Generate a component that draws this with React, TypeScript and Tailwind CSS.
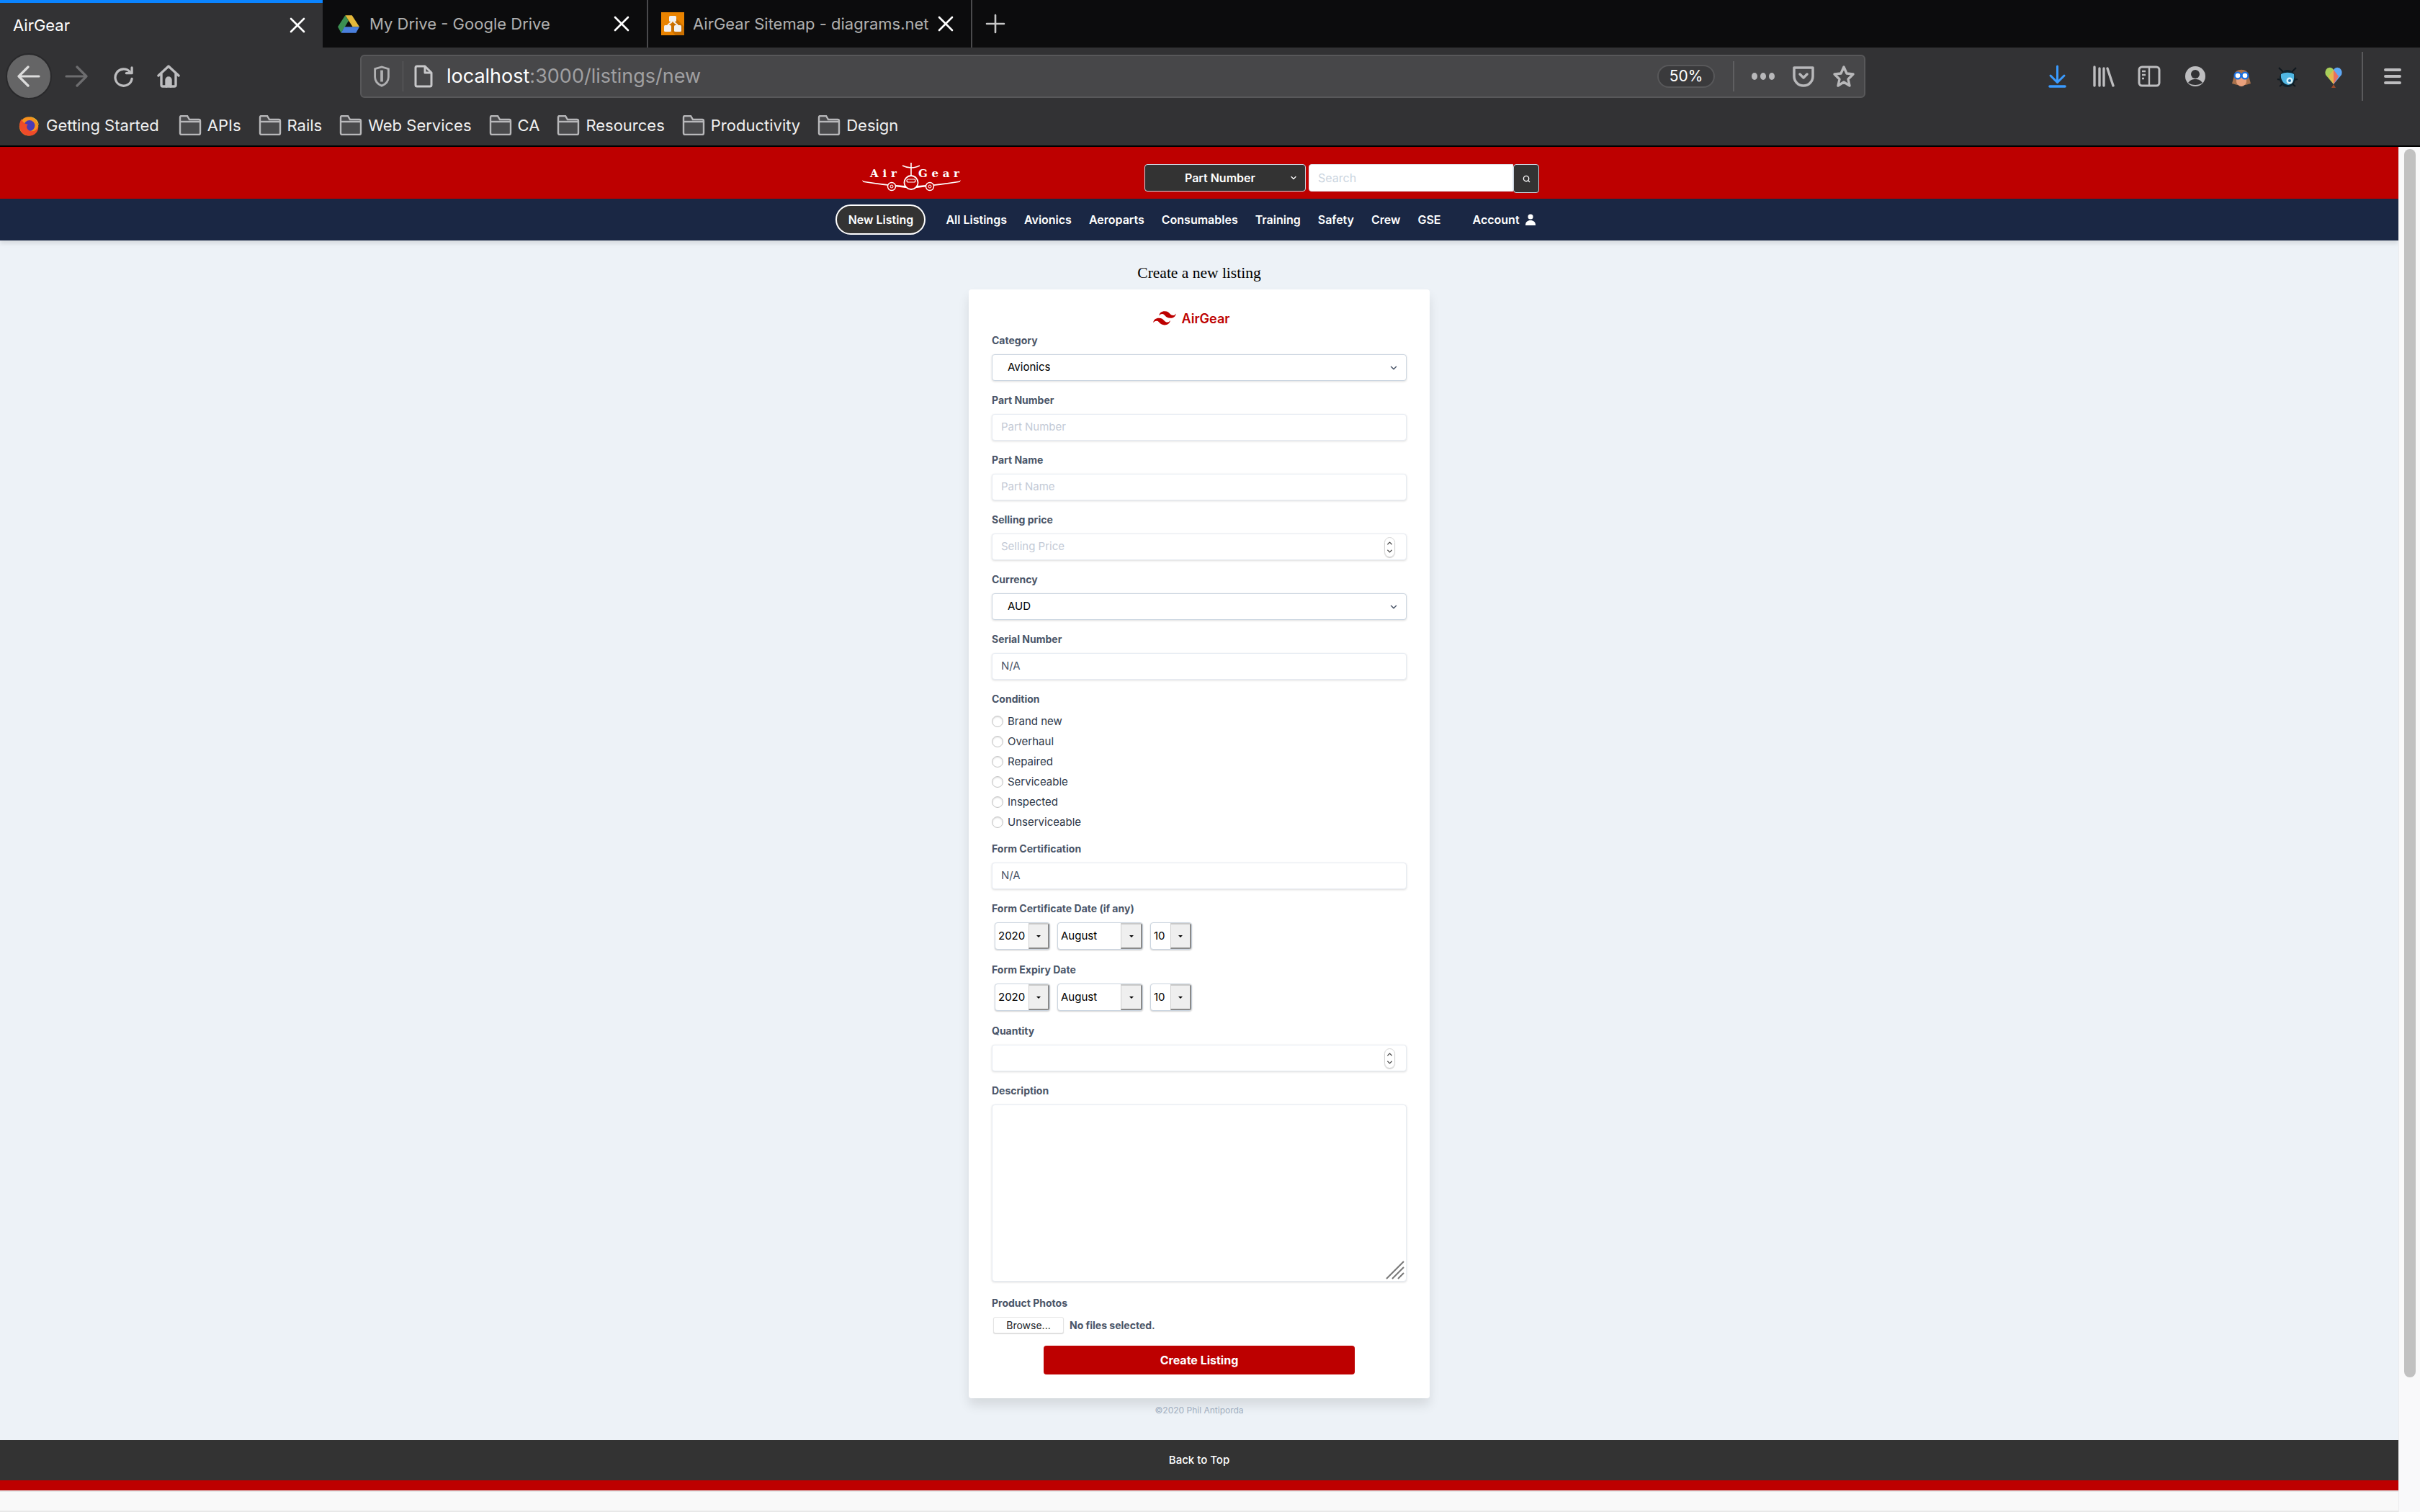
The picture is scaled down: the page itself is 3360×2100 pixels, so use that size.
import { ChevronDown, ChevronUp, Search } from 'lucide-react';

const sans = "font-['Inter','Noto_Sans',sans-serif]";
const bookmarks = ['APIs', 'Rails', 'Web Services', 'CA', 'Resources', 'Productivity', 'Design'];
const navLinks = ['All Listings', 'Avionics', 'Aeroparts', 'Consumables', 'Training', 'Safety', 'Crew', 'GSE'];
const conditions = ['Brand new', 'Overhaul', 'Repaired', 'Serviceable', 'Inspected', 'Unserviceable'];

function Tab({ title, width, active, icon }: { title: string; width: string; active?: boolean; icon?: React.ReactNode }) {
  return (
    <div className={`${width} h-full flex items-center pr-[16px] ${active ? 'bg-[#323234] border-t-4 border-[#0a84ff] pl-[18px] text-white' : 'border-r-2 border-[#4a4a4c] text-[#b0b0b0]'}`}>
      {icon}
      <span className="flex-1 text-[22px] whitespace-nowrap overflow-hidden">{title}</span>
      <svg viewBox="0 0 22 22" className="w-[22px] h-[22px] mr-[8px] text-white" fill="none" stroke="currentColor" strokeWidth="2.6" strokeLinecap="round">
        <path d="M2 2l18 18M20 2 2 20" />
      </svg>
    </div>
  );
}

function Label({ children }: { children: React.ReactNode }) {
  return <div className="h-[19px] mb-[10px] text-[14px] leading-[19px] font-bold text-[#4a5568]">{children}</div>;
}

function Spinner() {
  return (
    <span className="w-[15px] h-[28px] mr-[3px] rounded-full border border-[#d5d5d5] flex flex-col items-center justify-center shadow-[0_1px_1px_rgba(0,0,0,0.2)]">
      <ChevronUp className="w-[11px] h-[11px] text-[#444]" strokeWidth={3} />
      <ChevronDown className="w-[11px] h-[11px] text-[#444]" strokeWidth={3} />
    </span>
  );
}

function TextField({ label, placeholder, value, spinner }: { label: string; placeholder?: string; value?: string; spinner?: boolean }) {
  return (
    <div className="mb-[17px]">
      <Label>{label}</Label>
      <div className="h-[37px] border border-[#e6ebf2] rounded-[4px] shadow-[0_1px_3px_rgba(0,0,0,0.14)] bg-white pl-[12px] pr-[12px] flex items-center justify-between text-[15px]">
        <span className={value ? 'text-[#4a5568]' : 'text-[#c3cad6]'}>{value || placeholder}</span>
        {spinner && <Spinner />}
      </div>
    </div>
  );
}

function SelectField({ label, value }: { label: string; value: string }) {
  return (
    <div className="mb-[17px]">
      <Label>{label}</Label>
      <div className="h-[37px] border border-[#cbd5e0] rounded-[4px] shadow-[0_1px_3px_rgba(0,0,0,0.14)] bg-white pl-[21px] pr-[10px] flex items-center justify-between text-[15px] text-black">
        <span>{value}</span>
        <ChevronDown className="w-[14px] h-[14px] text-[#4a5568]" strokeWidth={2.5} />
      </div>
    </div>
  );
}

function DatePart({ value, width, arrow }: { value: string; width: string; arrow: string }) {
  return (
    <div className={`${width} h-[38px] flex border border-[#cbd5e0] rounded-[4px] shadow-[0_1px_2px_rgba(0,0,0,0.2)] bg-white overflow-hidden`}>
      <span className="flex-1 pl-[4px] text-[15px] leading-[36px] text-black">{value}</span>
      <span className={`${arrow} bg-[#efefef] border-r-2 border-b-2 border-t-2 border-t-[#c8c8c8] border-r-[#8a8a8a] border-b-[#8a8a8a] border-l border-l-[#d0d0d0] flex items-center justify-center`}>
        <span className="w-0 h-0 border-l-[3px] border-r-[3px] border-t-[3px] border-l-transparent border-r-transparent border-t-black" />
      </span>
    </div>
  );
}

function DateRow({ label }: { label: string }) {
  return (
    <div className="mb-[18px]">
      <Label>{label}</Label>
      <div className="flex gap-[10px] pl-[4px]">
        <DatePart value="2020" width="w-[77px]" arrow="w-[29px]" />
        <DatePart value="August" width="w-[119px]" arrow="w-[30px]" />
        <DatePart value="10" width="w-[58px]" arrow="w-[29px]" />
      </div>
    </div>
  );
}

function PlaneLogo() {
  return (
    <svg viewBox="0 0 137 40" className="-mt-[2px] w-[137px] h-[40px] text-white">
      <path d="M0 24 L1.5 27 C20 30 45 33 60 35 L76 35 C92 33 117 30 135.5 27 L137 24 L135 25.5 C115 29 92 31 76 32 L60 32 C45 31 22 29 2 25.5 Z" fill="currentColor" />
      <circle cx="68" cy="27.5" r="9.5" fill="#bd0000" stroke="currentColor" strokeWidth="1.8" />
      <rect x="62" y="23" width="12" height="4" rx="2" fill="none" stroke="currentColor" strokeWidth="1.2" />
      <path d="M68 0 V18 M56 4 C60 6 64 7 68 7 C72 7 76 6 80 4" fill="none" stroke="currentColor" strokeWidth="1.6" />
      <circle cx="41" cy="33" r="5.5" fill="#bd0000" stroke="currentColor" strokeWidth="1.4" />
      <circle cx="41" cy="33" r="2" fill="none" stroke="currentColor" strokeWidth="1" />
      <circle cx="94" cy="33" r="5.5" fill="#bd0000" stroke="currentColor" strokeWidth="1.4" />
      <circle cx="94" cy="33" r="2" fill="none" stroke="currentColor" strokeWidth="1" />
      <text x="11" y="20" fontSize="15" fontWeight="700" textLength="37" lengthAdjust="spacing" fontFamily="DejaVu Serif, serif" fill="currentColor">Air</text>
      <text x="78" y="20" fontSize="15" fontWeight="700" textLength="57" lengthAdjust="spacing" fontFamily="DejaVu Serif, serif" fill="currentColor">Gear</text>
    </svg>
  );
}

function FolderIcon() {
  return (
    <svg viewBox="0 0 32 28" className="w-[32px] h-[28px] mr-[8px] text-[#b8b8ba]" stroke="currentColor" strokeWidth="2.4">
      <path d="M2 3a2 2 0 0 1 2-2h8l3 5h13a2 2 0 0 1 2 2v17a2 2 0 0 1-2 2H4a2 2 0 0 1-2-2z" fill="#4a4a4c" />
      <path d="M2 9h28" fill="none" />
    </svg>
  );
}

function Toolbar() {
  return (
    <div className="h-[80px] bg-[#323234] flex items-center pl-[8px]">
      <div className="w-[64px] h-[64px] rounded-full bg-[#656566] border-2 border-[#29292b] flex items-center justify-center">
        <svg viewBox="0 0 32 32" className="w-[32px] h-[32px] text-[#dcdcdc]" fill="none" stroke="currentColor" strokeWidth="3.2" strokeLinecap="round" strokeLinejoin="round">
          <path d="M30 16H3M15 3 2 16l13 13" />
        </svg>
      </div>
      <svg viewBox="0 0 32 32" className="ml-[18px] w-[32px] h-[32px] text-[#6d6d6f]" fill="none" stroke="currentColor" strokeWidth="3.2" strokeLinecap="round" strokeLinejoin="round">
        <path d="M2 16h27M17 3l13 13-13 13" />
      </svg>
      <svg viewBox="0 0 30 30" className="ml-[35px] w-[29px] h-[29px] text-[#bdbdbf]" fill="none" stroke="currentColor" strokeWidth="3.4" strokeLinecap="round" strokeLinejoin="round">
        <path d="M24 8a12 12 0 1 0 3 10" />
        <path d="M27 2v8h-8" />
      </svg>
      <svg viewBox="0 0 32 32" className="ml-[32px] w-[32px] h-[32px] text-[#bdbdbf]" fill="none" stroke="currentColor" strokeWidth="3.4" strokeLinecap="round" strokeLinejoin="round">
        <path d="M2 15 16 2l14 13" />
        <path d="M6 13v15a2 2 0 0 0 2 2h16a2 2 0 0 0 2-2V13" />
        <path d="M13 30v-9a3 3 0 0 1 6 0v9" fill="currentColor" />
      </svg>
      <div className="ml-[250px] w-[2090px] h-[60px] rounded-[6px] bg-[#474749] border-2 border-[#58585a] flex items-center pl-[16px] pr-[12px]">
        <svg viewBox="0 0 24 32" className="w-[24px] h-[30px] text-[#b0b0b2]" fill="none" stroke="currentColor" strokeWidth="3">
          <path d="M2 5 12 2l10 3v12c0 7-5 11-10 13C7 28 2 24 2 17z" />
          <path d="M12 7v17" strokeWidth="4" />
        </svg>
        <div className="w-[1px] h-[42px] bg-[#5f5f61] ml-[17px] mr-[14px]" />
        <svg viewBox="0 0 28 32" className="w-[28px] h-[32px] text-[#c8c8ca]" fill="none" stroke="currentColor" strokeWidth="3" strokeLinejoin="round">
          <path d="M3 4a2 2 0 0 1 2-2h11l9 9v17a2 2 0 0 1-2 2H5a2 2 0 0 1-2-2z" />
          <path d="M16 2v9h9" />
        </svg>
        <div className="ml-[18px] text-[27px] flex-1 whitespace-nowrap">
          <span className="text-white">localhost</span>
          <span className="text-[#a0a0a2]">:3000/listings/new</span>
        </div>
        <div className="w-[80px] h-[32px] rounded-full bg-[#3a3a3c] border-2 border-[#58585a] flex items-center justify-center text-[21px] text-white">50%</div>
        <div className="w-[2px] h-[42px] bg-[#5f5f61] ml-[25px] mr-[24px]" />
        <svg viewBox="0 0 32 12" className="w-[32px] h-[12px] text-[#b8b8ba]" fill="currentColor">
          <ellipse cx="4" cy="6" rx="4" ry="5" />
          <ellipse cx="16" cy="6" rx="4" ry="5" />
          <ellipse cx="28" cy="6" rx="4" ry="5" />
        </svg>
        <svg viewBox="0 0 32 32" className="ml-[24px] w-[32px] h-[32px] text-[#b8b8ba]" fill="none" stroke="currentColor" strokeWidth="3.5" strokeLinecap="round" strokeLinejoin="round">
          <path d="M3 4h26v12a13 13 0 0 1-26 0z" />
          <path d="m11 13 5 5 5-5" />
        </svg>
        <svg viewBox="0 0 32 32" className="ml-[24px] w-[32px] h-[32px] text-[#b8b8ba]" fill="none" stroke="currentColor" strokeWidth="3.4" strokeLinejoin="round">
          <path d="m16 3 4 9 9 1-7 7 2 9-8-5-8 5 2-9-7-7 9-1z" />
        </svg>
      </div>
      <svg viewBox="0 0 25 32" className="ml-[254px] w-[25px] h-[32px] text-[#3a9bff]" fill="none" stroke="currentColor" strokeWidth="3" strokeLinecap="round" strokeLinejoin="round">
        <path d="M12.5 2v22M3 15l9.5 9.5L22 15" />
        <path d="M2 30h21" strokeWidth="3.6" />
      </svg>
      <svg viewBox="0 0 30 30" className="ml-[37px] w-[30px] h-[30px] text-[#bdbdbf]" fill="none" stroke="currentColor" strokeWidth="3.4" strokeLinecap="round">
        <path d="M2 2v26M9 4v24M15 4v24M20 4l8 24" />
      </svg>
      <svg viewBox="0 0 32 30" className="ml-[32px] w-[32px] h-[30px] text-[#bdbdbf]" fill="none" stroke="currentColor" strokeWidth="3">
        <rect x="2" y="2" width="28" height="26" rx="4" />
        <path d="M16 2v26M6 8h5M6 13h5M6 18h3" strokeWidth="2.4" />
      </svg>
      <svg viewBox="0 0 28 28" className="ml-[34px] w-[28px] h-[28px]">
        <circle cx="14" cy="14" r="14" fill="#bdbdbf" />
        <circle cx="14" cy="11" r="6" fill="#323234" />
        <path d="M4 23c3-4 6-5 10-5s7 1 10 5c-3 2-6 3-10 3s-7-1-10-3z" fill="#323234" />
      </svg>
      <svg viewBox="0 0 28 30" className="ml-[36px] w-[28px] h-[30px]">
        <path d="M4 14C4 3 24 3 24 14l3 11-7 2H8l-7-2z" fill="#a9714b" />
        <path d="M7 16h14v6c0 4-4 7-7 7s-7-3-7-7z" fill="#e9a07c" />
        <circle cx="9" cy="14" r="4.4" fill="#fff" stroke="#1a6fe0" strokeWidth="2.2" />
        <circle cx="19" cy="14" r="4.4" fill="#fff" stroke="#1a6fe0" strokeWidth="2.2" />
      </svg>
      <svg viewBox="0 0 30 32" className="ml-[35px] w-[30px] h-[32px]">
        <path d="M3 4l6 6M27 4l-6 6M1 20l5 1M29 20l-5 1M4 30l5-4M26 30l-5-4" stroke="#10181e" strokeWidth="2" />
        <ellipse cx="15" cy="19" rx="11" ry="12" fill="#10222c" />
        <path d="M6 13c5-3 13-3 18 0 1 7-1 14-8 15-7-1-11-8-10-15z" fill="#4fb6e3" />
        <circle cx="18" cy="22" r="4.5" fill="#d8f2fb" />
        <circle cx="18" cy="22" r="2" fill="#1f6fa8" />
      </svg>
      <svg viewBox="0 0 26 32" className="ml-[36px] w-[26px] h-[32px]">
        <path d="M13 27 2 14C-1 5 9 0 13 7z" fill="#a8cf5a" />
        <path d="M13 27 24 14C27 5 17 0 13 7z" fill="#5fa8f5" />
        <path d="M13 7 6 16l7 11z" fill="#e6b64f" />
        <path d="M13 7l7 9-7 11z" fill="#e8705f" />
        <path d="m13 27-3 5h6z" fill="#9a4a2a" />
      </svg>
      <div className="ml-[26px] w-[2px] h-[68px] bg-[#5a5a5c]" />
      <svg viewBox="0 0 24 24" className="ml-[29px] w-[24px] h-[24px] text-[#bdbdbf]" fill="none" stroke="currentColor" strokeWidth="4" strokeLinecap="round">
        <path d="M2 3h20M2 12h20M2 21h20" />
      </svg>
    </div>
  );
}

export default function App() {
  return (
    <div className={`w-[3360px] h-[2100px] overflow-hidden flex flex-col bg-white ${sans}`}>
      {/* Browser tabs */}
      <div className="h-[66px] bg-[#0c0c0d] flex items-stretch">
        <Tab title="AirGear" width="w-[448px]" active />
        <Tab
          title="My Drive - Google Drive"
          width="w-[452px] pl-[21px]"
          icon={
            <svg viewBox="0 0 32 28" className="w-[30px] h-[27px] mr-[14px]">
              <path d="M11 1h10l11 17H22z" fill="#e4b83a" />
              <path d="M11 1 0 18l5 9L16 9z" fill="#3b8f52" />
              <path d="M10 18h22l-5 9H5z" fill="#4a7fdc" />
            </svg>
          }
        />
        <Tab
          title="AirGear Sitemap - diagrams.net"
          width="w-[450px] pl-[18px]"
          icon={
            <svg viewBox="0 0 32 32" className="w-[32px] h-[32px] mr-[12px]">
              <rect width="32" height="32" fill="#e98300" />
              <path d="M20 8 32 20v12H20L10 22z" fill="#c96f00" />
              <rect x="11" y="5" width="10" height="8" rx="1.5" fill="#f2f2f2" />
              <rect x="4" y="18" width="10" height="9" rx="1.5" fill="#f2f2f2" />
              <rect x="18" y="18" width="10" height="9" rx="1.5" fill="#f2f2f2" />
              <path d="M15 13 9 18M17 13l6 5" stroke="#f2f2f2" strokeWidth="2" />
            </svg>
          }
        />
        <div className="flex items-center pl-[18px]">
          <svg viewBox="0 0 28 28" className="w-[28px] h-[28px] text-[#c8c8c8]" fill="none" stroke="currentColor" strokeWidth="2.6" strokeLinecap="round">
            <path d="M14 2v24M2 14h24" />
          </svg>
        </div>
      </div>

      <Toolbar />

      {/* Bookmarks */}
      <div className="h-[58px] bg-[#323234] border-b-2 border-black flex items-center pl-[25px] text-[22px] text-[#f0f0f0] whitespace-nowrap">
        <svg viewBox="0 0 32 32" className="w-[30px] h-[31px] mr-[9px]">
          <circle cx="16" cy="17" r="14" fill="#f7921e" />
          <path d="M17 3c8 0 14 6 14 14 0-1-1-4-3-6-1-4-6-7-11-8z" fill="#ffcb2e" />
          <circle cx="17" cy="16" r="8" fill="#4a3bb5" />
          <path d="M5 6C-1 16 3 31 17 31c9 0 14-8 13-15-1 6-6 9-11 8-6-1-8-8-4-10-4 0-8-3-10-8z" fill="#ef4b2a" />
        </svg>
        <span className="mr-[27px]">Getting Started</span>
        {bookmarks.map((b) => (
          <span key={b} className="flex items-center mr-[24px]">
            <FolderIcon />
            {b}
          </span>
        ))}
      </div>

      <div className="flex-1 flex min-h-0">
        {/* Page */}
        <div className="flex-1 flex flex-col bg-[#edf2f7] min-w-0">
          <div className="h-[72px] bg-[#bd0000] flex items-start justify-center pl-[4px] pt-[24px]">
            <div className="flex items-start">
              <PlaneLogo />
              <div className="w-[255px]" />
              <div className="w-[224px] h-[38px] bg-[#333] border border-[#cbd5e0] rounded-[4px] text-white text-[16px] font-semibold flex items-center pl-[55px] pr-[10px] justify-between">
                <span>Part Number</span>
                <ChevronDown className="w-[12px] h-[12px] text-white" strokeWidth={2.5} />
              </div>
              <div className="ml-[4px] w-[284px] h-[38px] bg-white border border-[#e2e8f0] rounded-l-[4px] text-[16px] text-[#cbd5e0] pl-[12px] flex items-center">Search</div>
              <div className="w-[36px] h-[40px] bg-[#333] border border-[#cbd5e0] rounded-[4px] flex items-center justify-center">
                <Search className="w-[11px] h-[11px] text-white" strokeWidth={3} />
              </div>
            </div>
          </div>
          <div className="h-[58px] bg-[#1a2744] flex items-center justify-center pr-[38px] text-white text-[16px] font-semibold gap-[24px] shadow-[0_4px_6px_rgba(0,0,0,0.1)]">
            <span className="w-[125px] h-[42px] mr-[4px] bg-[#333] border-2 border-white rounded-full flex items-center justify-center">New Listing</span>
            {navLinks.map((l) => (
              <span key={l}>{l}</span>
            ))}
            <span className="ml-[20px] flex items-center gap-[8px]">
              Account
              <svg viewBox="0 0 14 16" className="w-[14px] h-[16px]" fill="currentColor">
                <circle cx="7" cy="4" r="3.6" />
                <path d="M0 16c0-5 3-7 7-7s7 2 7 7z" />
              </svg>
            </span>
          </div>

          <div className="flex-1 flex flex-col items-center min-h-0">
            <h1 className="mt-[31px] h-[28px] text-[21.5px] leading-[28px] font-['Liberation_Serif',serif] text-black">Create a new listing</h1>
            <div className="mt-[9px] w-[640px] h-[1540px] bg-white rounded-[4px] shadow-[0_10px_15px_rgba(0,0,0,0.1)] px-[32px] pt-[30px]">
              <div className="flex items-center justify-center h-[20px] mb-[11px] pr-[22px]">
                <svg viewBox="0 0 54 33" className="w-[32px] h-[20px] text-[#bd0000]" fill="currentColor">
                  <path d="M27 0c-7.2 0-11.7 3.6-13.5 10.8 2.7-3.6 5.85-4.95 9.45-4.05 2.054.513 3.522 2.004 5.147 3.653C30.744 13.09 33.808 16.2 40.5 16.2c7.2 0 11.7-3.6 13.5-10.8-2.7 3.6-5.85 4.95-9.45 4.05-2.054-.513-3.522-2.004-5.147-3.653C36.756 3.11 33.692 0 27 0zM13.5 16.2C6.3 16.2 1.8 19.8 0 27c2.7-3.6 5.85-4.95 9.45-4.05 2.054.514 3.522 2.004 5.147 3.653C17.244 29.29 20.308 32.4 27 32.4c7.2 0 11.7-3.6 13.5-10.8-2.7 3.6-5.85 4.95-9.45 4.05-2.054-.513-3.522-2.004-5.147-3.653C23.256 19.31 20.192 16.2 13.5 16.2z" />
                </svg>
                <span className="ml-[8px] text-[18px] font-semibold text-[#bd0000]">AirGear</span>
              </div>
              <SelectField label="Category" value="Avionics" />
              <TextField label="Part Number" placeholder="Part Number" />
              <TextField label="Part Name" placeholder="Part Name" />
              <TextField label="Selling price" placeholder="Selling Price" spinner />
              <SelectField label="Currency" value="AUD" />
              <TextField label="Serial Number" value="N/A" />
              <Label>Condition</Label>
              <div className="-mt-[2px] mb-[13px]">
                {conditions.map((c) => (
                  <div key={c} className="h-[28px] flex items-center text-[15px] text-[#2d3748]">
                    <span className="w-[16px] h-[16px] rounded-full border border-[#c4c4c4] shadow-[inset_0_1px_2px_rgba(0,0,0,0.15)] mr-[6px]" />
                    {c}
                  </div>
                ))}
              </div>
              <TextField label="Form Certification" value="N/A" />
              <DateRow label="Form Certificate Date (if any)" />
              <DateRow label="Form Expiry Date" />
              <TextField label="Quantity" spinner />
              <Label>Description</Label>
              <div className="h-[246px] mb-[20px] border border-[#e6ebf2] rounded-[4px] shadow-[0_1px_3px_rgba(0,0,0,0.14)] bg-white flex items-end justify-end p-[2px]">
                <svg viewBox="0 0 26 26" className="w-[26px] h-[26px] text-[#777]" stroke="currentColor" strokeWidth="2">
                  <path d="M1 25 25 1M9 25 25 9M17 25l8-8" />
                </svg>
              </div>
              <Label>Product Photos</Label>
              <div className="flex items-center h-[22px] pl-[2px]">
                <span className="w-[98px] h-[23px] bg-white border border-[#e4e4e4] rounded-[3px] shadow-[0_1px_1px_rgba(0,0,0,0.15)] text-[14px] text-[#222] flex items-center justify-center">Browse...</span>
                <span className="ml-[8px] text-[14px] font-bold text-[#4a5568]">No files selected.</span>
              </div>
              <button className="block mx-auto mt-[18px] w-[432px] h-[40px] bg-[#bd0000] rounded-[4px] text-white text-[16px] font-bold">Create Listing</button>
            </div>
            <div className="mt-[9px] text-[12px] leading-[16px] text-[#a0aec0]">©2020 Phil Antiporda</div>
            <div className="mt-[33px] self-stretch h-[56px] bg-[#333] flex items-center justify-center text-white text-[15px] font-medium">Back to Top</div>
            <div className="self-stretch h-[14px] bg-[#bd0000]" />
            <div className="self-stretch flex-1 bg-[#f9f9f9] border-y-2 border-[#e8e8e8]" />
          </div>
        </div>

        {/* Scrollbar */}
        <div className="w-[30px] bg-[#f9f9fa] border-l border-[#ececee] pt-[3px] flex justify-center">
          <div className="w-[16px] h-[1706px] rounded-full bg-[#c1c1c1]" />
        </div>
      </div>
    </div>
  );
}
